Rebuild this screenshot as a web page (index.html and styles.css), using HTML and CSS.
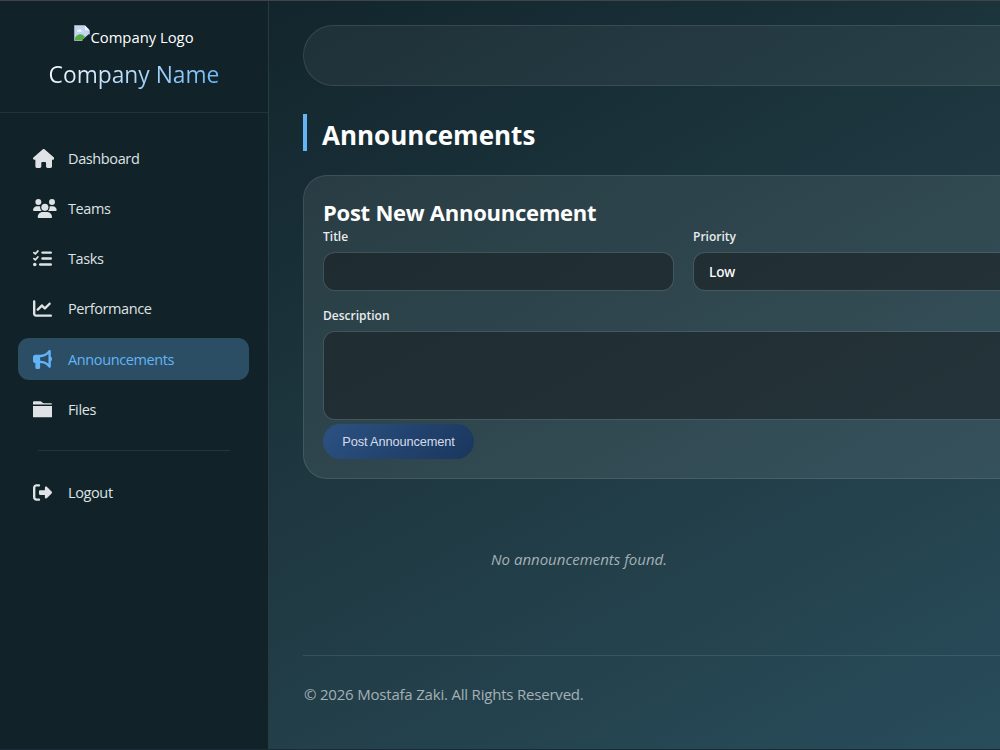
FILE: index.html
```html
<!doctype html>
<html lang="en">
    <head>
        <meta charset="utf-8" />
        <title>Announcements</title>
        <link rel="stylesheet" href="styles.css">
    </head>
    <body>
        <div class="layout">
            <aside class="sidebar">
                <div class="sidebar-header">
                    <div class="logo">
                        <svg width="16" height="16" viewBox="0 0 16 16">
                            <path fill="#c3d3f3" stroke="#a3a8ae" d="M.5.5h10.2l4.8 4.8v4.2L8.5 15.5H.5z" />
                            <path fill="#f5f7fb" d="M11 .5v4.8h4.5zM3 6.5c0-1.4 1-1.8 1.7-1.6C5.2 3.7 7 4 7 5.2c1 0 1.3 1.3.4 1.6H3z" />
                            <path fill="#4fae3c" d="M1 15v-2c2-3.5 5-4.5 8-3l2 2-3.5 3z" />
                            <path stroke="#112228" stroke-width="1.5" d="M8.5 15.5l7-6" />
                        </svg>
                        <span class="logo-alt">Company Logo</span>
                    </div>
                    <h2 class="company-name">Company Name</h2>
                </div>
                <nav class="nav">
                    <a class="nav-link">
                        <svg class="icon" viewBox="0 0 576 512"><path d="M575.8 255.5c0 18-15 32.1-32 32.1h-32l.7 160.2c0 2.7-.2 5.4-.5 8.1V472c0 22.1-17.9 40-40 40H392c-22.1 0-40-17.9-40-40v-88c0-17.7-14.3-32-32-32h-64c-17.7 0-32 14.3-32 32v88c0 22.1-17.9 40-40 40h-80c-22.1 0-40-17.9-40-40V287.6H32c-18 0-32-14-32-32.1 0-9 3-17 10-24L266.4 8c7-7 15-8 22-8s15 2 21 7l255.4 224.500c8 7 12 15 11 24z" /></svg>
                        <span class="nav-text">Dashboard</span>
                    </a>
                    <a class="nav-link">
                        <svg class="icon" viewBox="0 0 640 512"><circle cx="144" cy="80" r="80" /><circle cx="512" cy="80" r="80" /><circle cx="320" cy="224" r="96" /><path d="M0 298.7C0 239.8 47.8 192 106.7 192h42.7c16 0 31 3.5 44.6 9.7-6 28-2 80 41 118.3H21.3C9.6 320 0 310.4 0 298.7zM405 320c43-38 47-90 41-118.3 13.5-6.3 28.6-9.7 44.6-9.7h42.7c58.9 0 106.7 47.8 106.7 106.7 0 11.8-9.6 21.3-21.3 21.3zM128 485.3C128 411.7 187.7 352 261.3 352h117.4c73.6 0 133.3 59.7 133.3 133.3 0 14.7-11.9 26.7-26.7 26.7H154.7c-14.7 0-26.7-11.9-26.7-26.7z" /></svg>
                        <span class="nav-text">Teams</span>
                    </a>
                    <a class="nav-link">
                        <svg class="icon" viewBox="0 0 512 512"><path class="icon-check" d="M24 98l38 35 68-78M24 258l38 35 68-78" /><circle cx="48" cy="416" r="48" /><rect x="224" y="64" width="288" height="64" rx="32" /><rect x="224" y="224" width="288" height="64" rx="32" /><rect x="160" y="384" width="352" height="64" rx="32" /></svg>
                        <span class="nav-text">Tasks</span>
                    </a>
                    <a class="nav-link">
                        <svg class="icon" viewBox="0 0 512 512"><path d="M64 64c0-17.7-14.3-32-32-32S0 46.3 0 64v336c0 44.2 35.8 80 80 80h400c17.7 0 32-14.3 32-32s-14.3-32-32-32H80c-8.8 0-16-7.2-16-16V64zm406.6 86.6c12.5-12.5 12.5-32.8 0-45.3s-32.8-12.5-45.3 0L320 210.7l-57.4-57.4c-12.5-12.5-32.8-12.5-45.3 0l-112 112c-12.5 12.5-12.5 32.8 0 45.3s32.8 12.5 45.3 0L240 221.3l57.4 57.4c12.5 12.5 32.8 12.5 45.3 0l128-128z" /></svg>
                        <span class="nav-text">Performance</span>
                    </a>
                    <a class="nav-link active">
                        <svg class="icon" viewBox="0 0 512 512"><path d="M480 32c0-12.9-7.8-24.6-19.8-29.6s-25.7-2.2-34.9 6.9L381.7 53c-48 48-113.1 75-181 75H64c-35.3 0-64 28.7-64 64v96c0 35.3 28.7 64 64 64v128c0 17.7 14.3 32 32 32h64c17.7 0 32-14.3 32-32V352h8.7c67.9 0 133 27 181 75l43.6 43.6c9.2 9.2 22.9 11.9 34.9 6.9s19.8-16.6 19.8-29.6V300.4c18.6-8.8 32-32.5 32-60.4s-13.4-51.6-32-60.4V32zm-64 76.7v262.6C357.2 317.8 280.5 288 200.7 288H192v-96h8.7c79.8 0 156.5-29.8 215.3-83.3z" /></svg>
                        <span class="nav-text">Announcements</span>
                    </a>
                    <a class="nav-link">
                        <svg class="icon" viewBox="0 0 512 512"><path d="M0 120V64c0-18 14-32 32-32h160c20 0 34 9 46 22l20 22c8 9 16 12 30 12h192c20 0 32 12 32 32zM0 160h512v288c0 10-6 16-16 16H16c-10 0-16-6-16-16z" /></svg>
                        <span class="nav-text">Files</span>
                    </a>
                    <hr class="nav-divider">
                    <a class="nav-link">
                        <svg class="icon" viewBox="0 0 512 512"><path d="M377.9 105.9L500.7 228.7c7.2 7.2 11.3 17.1 11.3 27.3s-4.1 20.1-11.3 27.3L377.9 406.1c-6.4 6.4-15 9.9-24 9.9-18.7 0-33.9-15.2-33.9-33.9V320H192c-17.7 0-32-14.3-32-32v-64c0-17.7 14.3-32 32-32h128v-62.1c0-18.7 15.2-33.9 33.9-33.9 9 0 17.6 3.6 24 9.9zM160 96H96c-17.7 0-32 14.3-32 32v256c0 17.7 14.3 32 32 32h64c17.7 0 32 14.3 32 32s-14.3 32-32 32H96c-53 0-96-43-96-96V128C0 75 43 32 96 32h64c17.7 0 32 14.3 32 32s-14.3 32-32 32z" /></svg>
                        <span class="nav-text">Logout</span>
                    </a>
                </nav>
            </aside>

            <main class="main">
                <header class="topbar"></header>
                <h1 class="page-title">Announcements</h1>
                <form class="card">
                    <h2 class="card-title">Post New Announcement</h2>
                    <div class="form-grid">
                        <div>
                            <label class="label" for="title">Title</label>
                            <input class="field" type="text" id="title" />
                        </div>
                        <div>
                            <label class="label" for="priority">Priority</label>
                            <select class="field" id="priority">
                                <option>Low</option>
                                <option>Medium</option>
                                <option>High</option>
                            </select>
                        </div>
                    </div>
                    <label class="label" for="description">Description</label>
                    <textarea class="field field-area" id="description"></textarea>
                    <button class="btn" type="button">Post Announcement</button>
                </form>
                <p class="empty">No announcements found.</p>
                <footer class="footer">&copy; 2026 Mostafa Zaki. All Rights Reserved.</footer>
            </main>
        </div>
    </body>
</html>
```
FILE: styles.css
```css
* {
    margin: 0;
    padding: 0;
    box-sizing: border-box;
}
html,
body {
    height: 750px;
    overflow: hidden;
}
body {
    font-family: "Open Sans", "Noto Sans", sans-serif;
    font-size: 15px;
    color: #fff;
}
.layout {
    display: flex;
    width: 1366px;
    height: 750px;
    border-top: 1px solid #414446;
    border-bottom: 1px solid #172c36;
    background: linear-gradient(to bottom right, #0f2027, #203a43, #2c5364);
}
.sidebar {
    width: 269px;
    flex-shrink: 0;
    background: #112228;
    border-right: 1px solid #293a40;
}
.sidebar-header {
    height: 112px;
    padding-top: 24px;
    border-bottom: 1px solid #22343a;
    text-align: center;
}
.logo {
    display: flex;
    justify-content: center;
    height: 33px;
}
.logo-alt {
    line-height: 24px;
    font-size: 14.8px;
}
.company-name {
    display: inline-block;
    font-size: 22.8px;
    font-weight: 400;
    line-height: 33px;
    background: linear-gradient(135deg, #fff, #63b3f7);
    -webkit-background-clip: text;
    background-clip: text;
    color: transparent;
}
.nav {
    display: flex;
    flex-direction: column;
    gap: 8.2px;
    padding: 24.4px 19px 0 18px;
}
.nav-link {
    display: flex;
    align-items: center;
    height: 42px;
    padding-left: 15px;
    border-radius: 11px;
    color: #dfe3e5;
    font-size: 14.5px;
    letter-spacing: -0.38px;
}
.nav-link.active {
    background: #2b4e65;
    color: #63b3f7;
}
.icon {
    height: 19px;
    fill: currentColor;
}
.icon-check {
    fill: none;
    stroke: currentColor;
    stroke-width: 48;
    stroke-linecap: round;
    stroke-linejoin: round;
}
.nav-text {
    margin-left: auto;
    width: 181px;
}
.nav-divider {
    height: 1px;
    margin: 11px 19px 12.5px 19.5px;
    border: none;
    background: #24363d;
}
.main {
    width: 795px;
    padding: 24px 0 0 34px;
}
.topbar {
    width: 900px;
    height: 61px;
    border: 1px solid rgba(255, 255, 255, 0.1);
    border-radius: 31px;
    background: rgba(255, 255, 255, 0.05);
}
.page-title {
    height: 37px;
    margin-top: 28px;
    padding-left: 15px;
    border-left: 4px solid #63b3f7;
    font-size: 26px;
    font-weight: 700;
    line-height: 42px;
}
.card {
    height: 304px;
    margin-top: 24px;
    padding: 19px;
    border: 1px solid rgba(255, 255, 255, 0.1);
    border-radius: 24px;
    background: rgba(255, 255, 255, 0.08);
}
.card-title {
    height: 33px;
    font-size: 22px;
    font-weight: 700;
    letter-spacing: -0.25px;
    line-height: 34px;
}
.form-grid {
    display: grid;
    grid-template-columns: 1fr 1fr;
    gap: 19px;
    height: 79px;
}
.label {
    display: block;
    height: 23.5px;
    font-size: 12px;
    font-weight: 600;
    line-height: 17px;
    color: #e8ecee;
}
.field {
    display: block;
    width: 100%;
    height: 39px;
    padding: 0 15px;
    border: 1px solid rgba(255, 255, 255, 0.1);
    border-radius: 12px;
    background: rgba(20, 24, 26, 0.5) padding-box;
    color: #fff;
    font-family: "Noto Sans", sans-serif;
    font-size: 13.6px;
    font-weight: 500;
    appearance: none;
}
.field-area {
    height: 89.5px;
    resize: none;
}
.btn {
    width: 151px;
    height: 35px;
    margin-top: 4px;
    border: none;
    border-radius: 18px;
    background: linear-gradient(135deg, #2c5282, #1a365d);
    color: #d5dce8;
    font-family: "Liberation Sans", Arial, sans-serif;
    font-size: 12.8px;
    letter-spacing: -0.12px;
}
.empty {
    width: 552px;
    height: 176px;
    line-height: 160px;
    text-align: center;
    font-size: 15px;
    font-style: italic;
    color: #a5b0b5;
}
.footer {
    width: 900px;
    border-top: 1px solid rgba(255, 255, 255, 0.1);
    padding: 26px 0 0 1px;
    line-height: 24px;
    font-size: 15px;
    letter-spacing: -0.2px;
    color: #a5b0b5;
}
```
